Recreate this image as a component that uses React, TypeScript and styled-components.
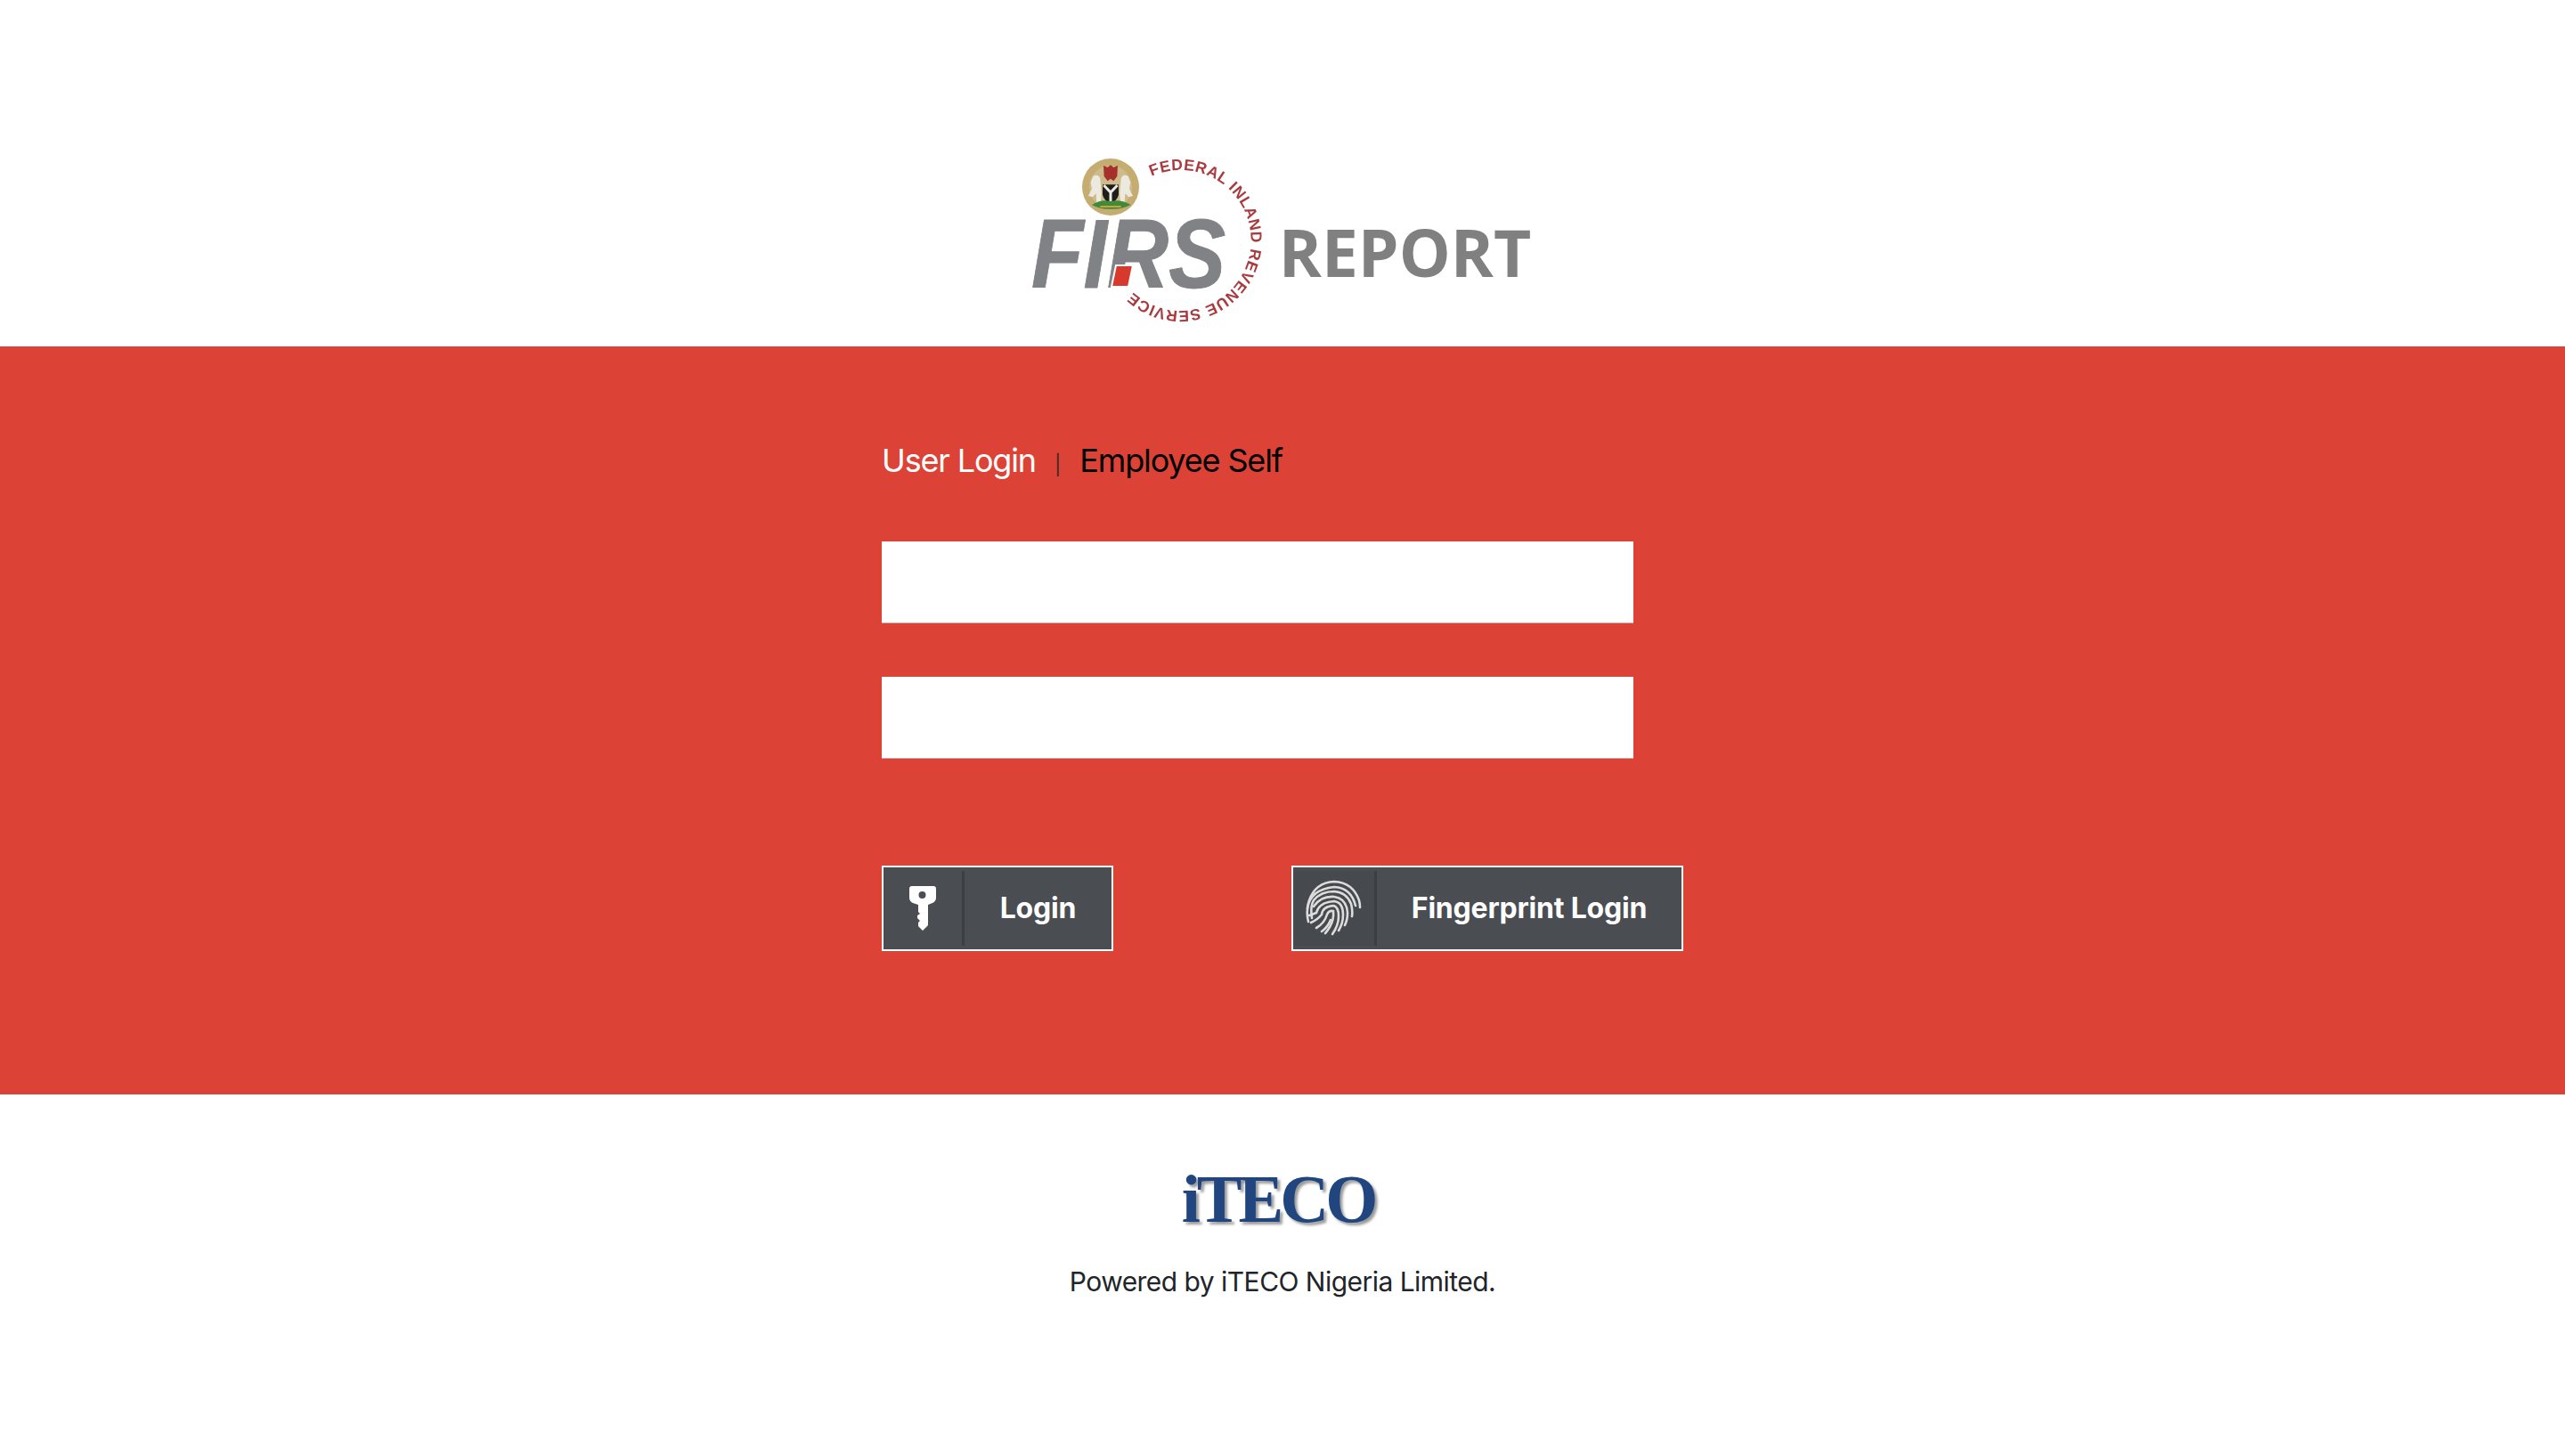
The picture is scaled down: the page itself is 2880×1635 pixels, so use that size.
import React from 'react'
import styled, { createGlobalStyle } from 'styled-components'

const GlobalStyle = createGlobalStyle`
  html, body {
    margin: 0;
    padding: 0;
    background: #fff;
    font-family: Inter, "Liberation Sans", sans-serif;
  }
`

const Page = styled.div`
  display: flex;
  flex-direction: column;
  min-height: 1635px;
`

const Header = styled.header`
  display: flex;
  justify-content: center;
  align-items: flex-start;
  height: 389px;
  padding-top: 172px;
  box-sizing: border-box;
`

const Brand = styled.div`
  display: flex;
  align-items: flex-start;
  margin-right: 6px;
  filter: blur(0.6px);
`

const ReportText = styled.span`
  margin: 61px 0 0 11px;
  font-family: "Open Sans", "Noto Sans", sans-serif;
  font-weight: 700;
  font-size: 73px;
  line-height: 100px;
  color: #808080;
`

const Band = styled.main`
  display: flex;
  justify-content: center;
  height: 840px;
  background: #dd4236;
`

const Form = styled.form`
  display: flex;
  flex-direction: column;
  align-items: flex-start;
  width: 900px;
  padding-top: 101px;
`

const Tabs = styled.div`
  display: flex;
  align-items: baseline;
  height: 54px;
  margin-bottom: 64px;
`

const Tab = styled.a<{ $active?: boolean }>`
  font-size: 36px;
  line-height: 54px;
  letter-spacing: -1.15px;
  color: ${p => (p.$active ? '#fff' : '#000')};
  cursor: pointer;
`

const Divider = styled.span`
  margin: 0 21px;
  font-size: 22px;
  color: #3a2a28;
`

const TextField = styled.input`
  display: block;
  box-sizing: border-box;
  width: 844px;
  height: 92px;
  margin-bottom: 60px;
  padding: 0 20px;
  background: #fff;
  border: 0;
  border-bottom: 1px solid #c4b4b2;
  outline: none;
`

const Actions = styled.div`
  display: flex;
  justify-content: space-between;
  width: 100%;
  margin-top: 60px;
`

const ActionButton = styled.button<{ $wide?: boolean }>`
  display: flex;
  align-items: stretch;
  box-sizing: border-box;
  width: ${p => (p.$wide ? 440 : 260)}px;
  height: 96px;
  padding: 0;
  background: #4a4d52;
  border: 2px solid #fff;
  color: #fff;
  font-family: inherit;
  cursor: pointer;
`

const IconCell = styled.span<{ $wide?: boolean }>`
  display: flex;
  align-items: center;
  justify-content: center;
  box-sizing: border-box;
  flex: none;
  width: ${p => (p.$wide ? 94 : 91)}px;
  height: 84px;
  margin-top: 4px;
  background: ${p => (p.$wide ? '#46494d' : 'transparent')};
  border-right: 3px solid #3c3e41;

  svg {
    filter: blur(0.5px);
  }
`

const ButtonLabel = styled.span`
  flex: 1;
  align-self: center;
  text-align: center;
  font-size: 32px;
  font-weight: 700;
  letter-spacing: -0.2px;
  line-height: 40px;
`

const Footer = styled.footer`
  display: flex;
  flex-direction: column;
  align-items: center;
  padding-top: 71px;
`

const ItecoLogo = styled.div`
  font-family: "Liberation Serif", serif;
  font-weight: 700;
  font-size: 76px;
  line-height: 92px;
  letter-spacing: -4px;
  padding-right: 10px;
  color: #21467f;
  text-shadow: 3px 3px 3px rgba(0, 0, 0, 0.4);
  filter: blur(0.6px);
`

const PoweredBy = styled.p`
  margin: 25px 0 0;
  font-size: 30px;
  letter-spacing: -0.53px;
  line-height: 44px;
  color: #212529;
`

function FirsLogo() {
  return (
    <svg width="270" height="200" viewBox="0 0 270 200">
      <defs>
        <path id="firs-ring" d="M 138 26 A 79 79 0 1 1 116 155" fill="none" />
      </defs>

      {/* state emblem, drawn at 3x */}
      <g transform="translate(43 -2) scale(0.3333)">
        <circle cx="147" cy="120" r="96" fill="#c5ad72" />
        <circle cx="147" cy="120" r="72" fill="#cdbb8c" />
        <path d="M147 46 l10 8 14 -6 -2 36 -12 16 -10 -8 -10 8 -12 -16 -2 -36 14 6z" fill="#a5302c" />
        <path d="M88 84 q18 -10 24 8 l4 50 -2 36 -14 0 -2 -36 -12 12 -14 -4 12 -24 -4 -22z" fill="#ece9df" />
        <path d="M206 84 q-18 -10 -24 8 l-4 50 2 36 14 0 2 -36 12 12 14 -4 -12 -24 4 -22z" fill="#ece9df" />
        <path d="M120 112 h54 v34 q-6 22 -27 28 q-21 -6 -27 -28z" fill="#1d1d1b" />
        <path d="M124 114 l23 24 23 -24 M147 138 v32" stroke="#eceae2" strokeWidth="9" fill="none" />
        <path d="M84 180 q30 -20 63 -12 q35 -8 68 12 q-30 16 -68 14 q-36 2 -63 -14z" fill="#3f8b3a" />
        <path d="M112 186 h70" stroke="#d0a13a" strokeWidth="6" />
      </g>

      {/* ring lettering */}
      <text fontFamily="'Liberation Sans', sans-serif" fontWeight="700" fontSize="17.5" fill="#a93a3e">
        <textPath href="#firs-ring" textLength="340" lengthAdjust="spacing">
          FEDERAL INLAND REVENUE SERVICE
        </textPath>
      </text>

      {/* word mark */}
      <text
        x="3"
        y="151"
        fontFamily="'Liberation Sans', sans-serif"
        fontWeight="700"
        fontStyle="italic"
        fontSize="110"
        fill="#808285"
        stroke="#808285"
        strokeWidth="1"
        strokeLinejoin="round"
        textLength="218"
        lengthAdjust="spacingAndGlyphs"
      >
        FIRS
      </text>
      <path d="M98 126 h19 l-5 24 h-19z" fill="#d8392c" stroke="#fff" strokeWidth="2" />
    </svg>
  )
}

function KeyIcon() {
  return (
    <svg width="30" height="51" viewBox="0 0 30 51">
      <path
        d="M3 0 H27 Q30 0 30 3 V13 Q30 17 26 19 L21 21 V44 L15 50 L10 45 V41 L12 39 L9 36 V33 L12 31 L10 29 V21 L4 19 Q0 17 0 13 V3 Q0 0 3 0z"
        fill="#fff"
      />
      <circle cx="14.5" cy="10" r="4" fill="#4a4d52" />
    </svg>
  )
}

// ridges of the print, outer to inner
const ridges = [
  'M4 48 Q1 36 5 24 Q12 4 33 3 Q54 4 61 24 Q62 28 62 32',
  'M3 33 Q6 12 33 9 Q52 10 57 30',
  'M8 44 Q6 30 10 24 Q18 14 33 14 Q47 15 52 28 Q54 36 53 42',
  'M10 31 Q18 19 33 20 Q47 22 48 38 Q48 46 45 52',
  'M5 41 Q8 40 13 38 Q16 26 33 25 Q43 26 43 40 Q43 50 38 58',
  'M7 49 Q14 46 19 40 Q20 31 32 30 Q38 31 38 42 Q38 52 31 62',
  'M13 55 Q22 50 25 40 Q27 35 32 36 Q33 46 28 54 Q25 59 23 61',
  'M19 59 Q26 54 29 46',
]

function FingerprintIcon() {
  return (
    <svg width="66" height="66" viewBox="0 0 66 66" fill="none">
      {ridges.map(d => (
        <path key={d} d={d} stroke="#dcdcdc" strokeWidth="2.6" strokeLinecap="round" />
      ))}
    </svg>
  )
}

export default function App() {
  return (
    <Page>
      <GlobalStyle />
      <Header>
        <Brand>
          <FirsLogo />
          <ReportText>REPORT</ReportText>
        </Brand>
      </Header>
      <Band>
        <Form onSubmit={e => e.preventDefault()}>
          <Tabs>
            <Tab $active>User Login</Tab>
            <Divider>|</Divider>
            <Tab>Employee Self</Tab>
          </Tabs>
          <TextField type="text" />
          <TextField type="password" />
          <Actions>
            <ActionButton type="submit">
              <IconCell>
                <KeyIcon />
              </IconCell>
              <ButtonLabel>Login</ButtonLabel>
            </ActionButton>
            <ActionButton type="button" $wide>
              <IconCell $wide>
                <FingerprintIcon />
              </IconCell>
              <ButtonLabel>Fingerprint Login</ButtonLabel>
            </ActionButton>
          </Actions>
        </Form>
      </Band>
      <Footer>
        <ItecoLogo>iTECO</ItecoLogo>
        <PoweredBy>Powered by iTECO Nigeria Limited.</PoweredBy>
      </Footer>
    </Page>
  )
}
